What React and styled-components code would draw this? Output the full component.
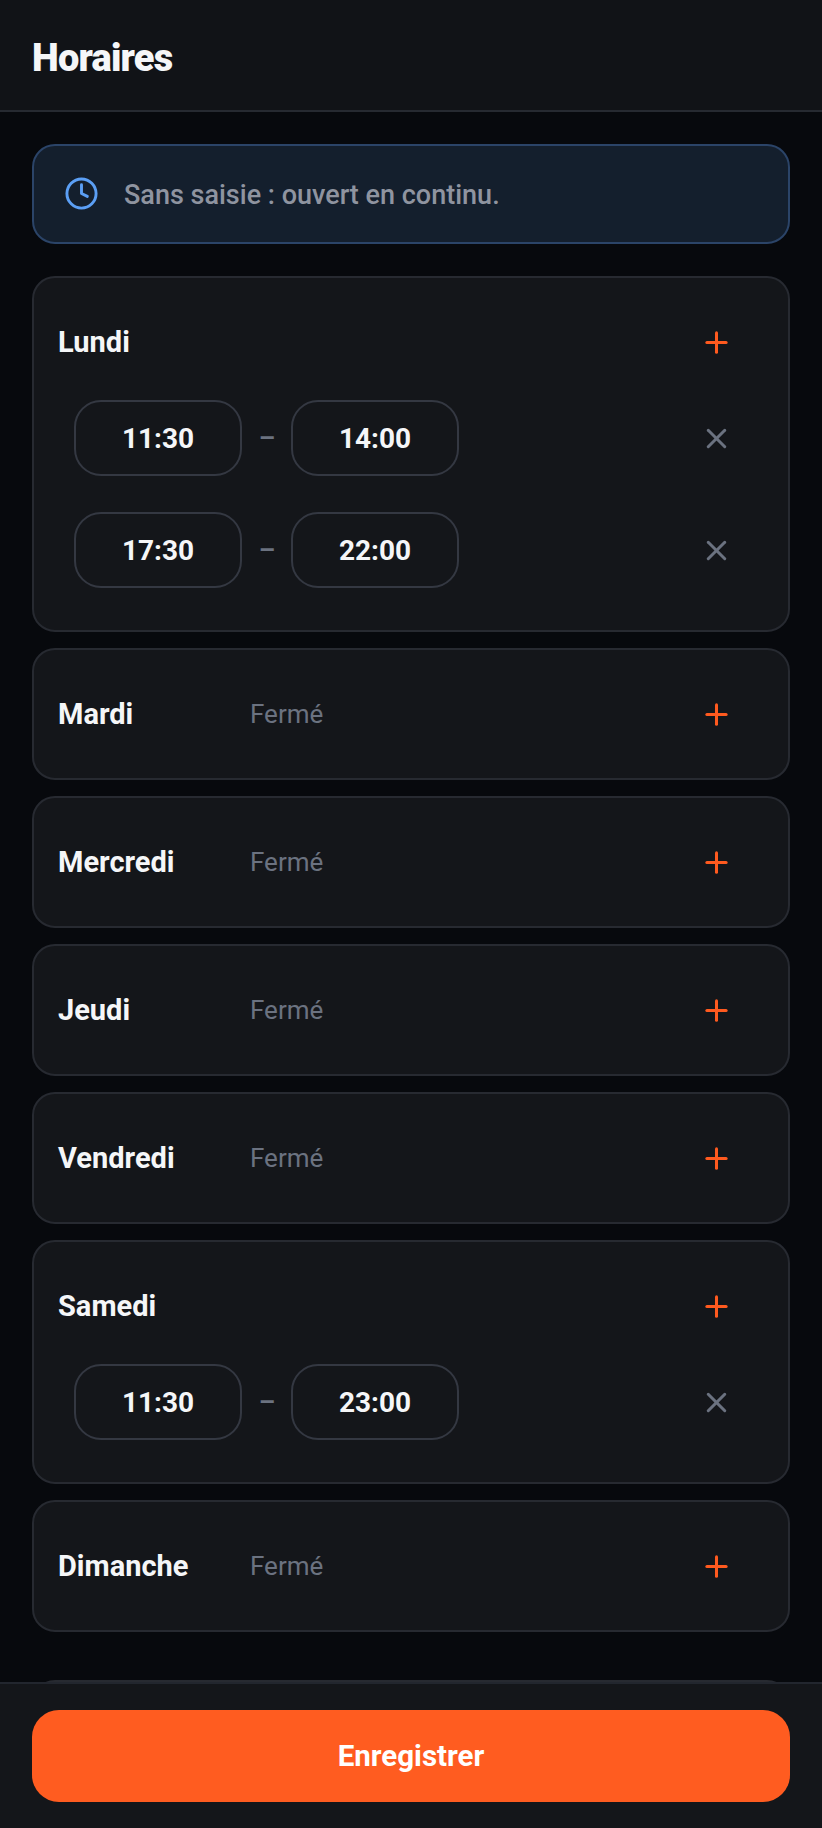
import React from 'react'
import styled, { createGlobalStyle } from 'styled-components'
import { Clock, Plus, X } from 'lucide-react'

const GlobalStyle = createGlobalStyle`
* { box-sizing: border-box; }
html, body { margin: 0; padding: 0; height: 100%; background: #07090d; }
body { font-family: Roboto, "Liberation Sans", sans-serif; color: #f5f6f8; }
`

const Page = styled.div`
height: 100vh;
display: flex;
flex-direction: column;
overflow: hidden;
background: #07090d;
`

const Header = styled.header`
flex: none;
height: 112px;
padding: 6px 32px 0;
display: flex;
align-items: center;
background: #111317;
border-bottom: 2px solid #262a31;
`

const Title = styled.h1`
margin: 0;
font-size: 38px;
font-weight: 900;
letter-spacing: -0.8px;
color: #f5f6f8;
`

const Content = styled.main`
flex: 1;
min-height: 0;
overflow: hidden;
padding: 32px 32px 0;
display: flex;
flex-direction: column;
`

const Notice = styled.div`
flex: none;
height: 100px;
margin-bottom: 32px;
padding: 0 30px;
display: flex;
align-items: center;
gap: 25px;
border: 2px solid #2b4468;
border-radius: 23px;
background: #141f2d;
color: #5b9ff5;
`

const NoticeIcon = styled(Clock)`
flex: none;
margin-top: -2px;
`

const NoticeText = styled.span`
padding-top: 2px;
font-size: 27px;
font-weight: 500;
color: #8f94a0;
`

const Card = styled.section`
flex: none;
margin-bottom: ${p => p.$gap}px;
padding: 23px 24px;
border: 2px solid #272a31;
border-radius: 23px;
background: #14161a;
`

const DayRow = styled.div`
height: 82px;
display: flex;
align-items: center;
`

const DayName = styled.span`
width: 192px;
flex: none;
font-size: 29px;
font-weight: 700;
color: #f5f6f8;
`

const Closed = styled.span`
flex: 1;
font-size: 26px;
font-weight: 450;
color: #6b7280;
`

const IconButton = styled.button`
width: 96px;
height: ${p => p.$height}px;
flex: none;
margin-left: auto;
padding: 0;
display: flex;
align-items: center;
justify-content: center;
border: 0;
background: none;
color: ${p => p.$danger ? '#6b7280' : '#ff5a1f'};
`

const Slots = styled.div`
margin-top: 17px;
padding-left: 16px;
padding-bottom: 19px;
display: flex;
flex-direction: column;
gap: 36px;
`

const SlotRow = styled.div`
display: flex;
align-items: center;
`

const TimeBox = styled.div`
width: 168px;
height: 76px;
display: flex;
align-items: center;
justify-content: center;
border: 2px solid #343842;
border-radius: 27px;
font-size: 28px;
font-weight: 700;
color: #f5f6f8;
`

const Dash = styled.span`
width: 50px;
margin-right: -1px;
text-align: center;
font-size: 26px;
font-weight: 600;
color: #6b7280;
`

const Footer = styled.footer`
flex: none;
height: 146px;
padding: 26px 32px;
background: #14161a;
border-top: 2px solid #22262e;
`

const SaveButton = styled.button`
width: 100%;
height: 92px;
border: 0;
border-radius: 27px;
background: #ff5c20;
font-family: inherit;
font-size: 29.5px;
font-weight: 700;
color: #fff;
`

const days = [
  { name: 'Lundi', slots: [['11:30', '14:00'], ['17:30', '22:00']], gap: 16 },
  { name: 'Mardi', slots: [], gap: 16 },
  { name: 'Mercredi', slots: [], gap: 16 },
  { name: 'Jeudi', slots: [], gap: 16 },
  { name: 'Vendredi', slots: [], gap: 16 },
  { name: 'Samedi', slots: [['11:30', '23:00']], gap: 16 },
  { name: 'Dimanche', slots: [], gap: 48 },
]

const App = () => {
  return (
    <Page>
      <GlobalStyle />
      <Header>
        <Title>Horaires</Title>
      </Header>
      <Content>
        <Notice>
          <NoticeIcon size={35} />
          <NoticeText>Sans saisie : ouvert en continu.</NoticeText>
        </Notice>
        {days.map(day => (
          <Card key={day.name} $gap={day.gap}>
            <DayRow>
              <DayName>{day.name}</DayName>
              {day.slots.length === 0 && <Closed>Fermé</Closed>}
              <IconButton $height={82}><Plus size={33} strokeWidth={2.2} /></IconButton>
            </DayRow>
            {day.slots.length > 0 && (
              <Slots>
                {day.slots.map(slot => (
                  <SlotRow key={slot[0]}>
                    <TimeBox>{slot[0]}</TimeBox>
                    <Dash>–</Dash>
                    <TimeBox>{slot[1]}</TimeBox>
                    <IconButton $height={76} $danger><X size={33} strokeWidth={2.2} /></IconButton>
                  </SlotRow>
                ))}
              </Slots>
            )}
          </Card>
        ))}
        <Card $gap={0}>
          <DayRow />
        </Card>
      </Content>
      <Footer>
        <SaveButton>Enregistrer</SaveButton>
      </Footer>
    </Page>
  )
}

export default App
